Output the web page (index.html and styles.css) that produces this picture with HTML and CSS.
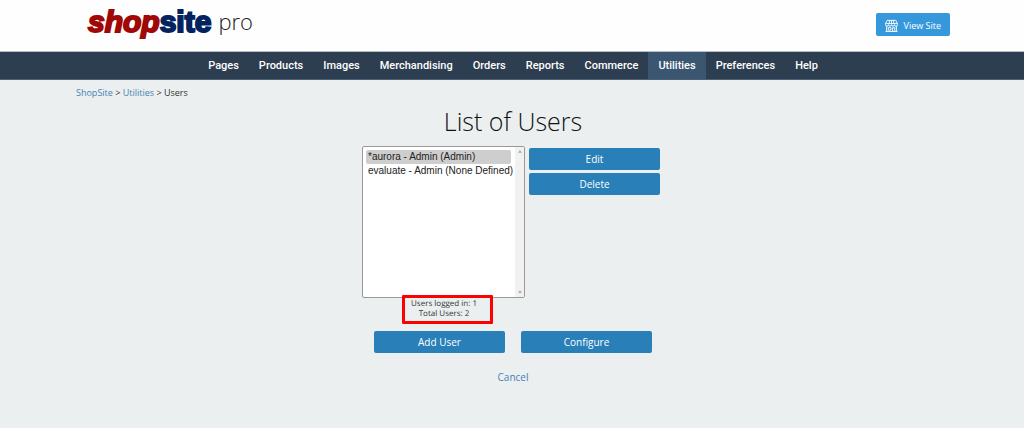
FILE: index.html
```html
<!DOCTYPE html>
<html lang="en">
<head>
<meta charset="utf-8">
<title>List of Users</title>
<link rel="stylesheet" href="styles.css">
</head>
<body>
<header class="header">
  <div class="brand"><span class="logo"><span class="logo-shop">shop</span><span class="logo-site">site</span></span><span class="edition">pro</span></div>
  <button class="view-site" type="button">
    <svg class="store-icon" viewBox="0 0 24 24" fill="none" stroke="currentColor" stroke-width="1.7" aria-hidden="true">
      <path d="M4 2.500h16l3 6H1zM8.500 2.500l-1 6M12 2.500v6M15.500 2.500l1 6M1 8.500v2a2.750 2.750 0 0 0 5.500 0a2.750 2.750 0 0 0 5.500 0a2.750 2.750 0 0 0 5.500 0a2.750 2.750 0 0 0 5.500 0v-2M3 13v10M21 13v10M1 23h22M6 16h5v4.500H6zM14 23v-7h4v7"/>
    </svg>
    <span>View Site</span>
  </button>
</header>
<nav class="nav">
  <a href="#">Pages</a><a href="#">Products</a><a href="#">Images</a><a href="#">Merchandising</a><a href="#">Orders</a><a href="#">Reports</a><a href="#">Commerce</a><a href="#" class="active">Utilities</a><a href="#">Preferences</a><a href="#">Help</a>
</nav>
<main class="main">
  <div class="crumbs"><a href="#">ShopSite</a> &gt; <a href="#">Utilities</a> &gt; Users</div>
  <h1 class="title">List of Users</h1>
  <form class="form">
    <div class="users">
      <div class="list-column">
        <div class="list-box">
          <select class="list" size="10" aria-label="Users">
            <option class="chosen">*aurora - Admin (Admin)</option>
            <option>evaluate - Admin (None Defined)</option>
          </select>
          <div class="track" aria-hidden="true">
            <svg class="arrow" viewBox="0 0 6 4"><path d="M0 4l3-4 3 4z"/></svg>
            <svg class="arrow" viewBox="0 0 6 4"><path d="M0 0l3 4 3-4z"/></svg>
          </div>
        </div>
        <div class="counts">Users logged in: 1<br>Total Users: 2</div>
      </div>
      <div class="side">
        <button class="btn" type="button">Edit</button>
        <button class="btn" type="button">Delete</button>
      </div>
    </div>
    <div class="actions">
      <button class="btn" type="button">Add User</button>
      <button class="btn" type="button">Configure</button>
    </div>
    <a class="cancel" href="#">Cancel</a>
  </form>
</main>
</body>
</html>
```
FILE: styles.css
```css
* { box-sizing: border-box; }
body {
  margin: 0;
  min-height: 100vh;
  background: #ebeff0;
  color: #333;
  font-family: "Open Sans", "Noto Sans", sans-serif;
  font-size: 10px;
}
a { color: #4682b4; text-decoration: none; }
.header {
  display: flex;
  justify-content: space-between;
  align-items: center;
  height: 51px;
  padding: 0 74px 2px 88px;
  background: #fefefe;
}
.brand { display: flex; align-items: center; gap: 7px; padding-bottom: 5px; }
.logo {
  font: italic bold 30px/40px "Liberation Sans", Arial, sans-serif;
  -webkit-text-stroke: 2px currentColor;
}
.logo-shop { color: #a00808; }
.logo-site { color: #03235f; font-style: normal; }
.edition { color: #222; font-size: 22px; font-weight: 300; line-height: 30px; padding-bottom: 3px; }
.view-site {
  display: flex;
  align-items: center;
  gap: 6px;
  height: 23px;
  padding: 2px 9px 0;
  border: 0;
  border-radius: 2px;
  background: #3498db;
  color: #fff;
  font: 9px "Open Sans", sans-serif;
}
.store-icon { width: 13px; height: 13px; }
.nav {
  display: flex;
  justify-content: center;
  height: 29px;
  padding-left: 2px;
  border-top: 1px solid #b4bec5;
  border-bottom: 1px solid #4b6076;
  background: #2c3e50;
}
.nav a {
  padding: 0 10px;
  color: #fff;
  font: 500 11px/27px Roboto, sans-serif;
}
.nav .active { background: #3a5670; }
.main { padding: 6px 0 24px; }
.crumbs { padding-left: 76px; font-size: 9px; line-height: 14px; }
.title {
  margin: 2px 0 6px;
  padding-left: 2px;
  color: #111;
  font-size: 25px;
  font-weight: 300;
  line-height: 38px;
  text-align: center;
}
.form { display: flex; flex-direction: column; align-items: center; }
.users { display: flex; align-items: flex-start; gap: 4px; padding-right: 2px; }
.list-column { width: 163px; }
.list-box { position: relative; }
.list {
  display: block;
  width: 100%;
  height: 152px;
  padding: 3px 13px 3px 3px;
  border: 1px solid #999;
  border-radius: 2px;
  background: #fff;
  color: #222;
  font: 10px "Liberation Sans", Arial, sans-serif;
}
.list option {
  height: 14px;
  min-height: 14px;
  padding: 1px 2px;
  border-radius: 2px;
  line-height: 12px;
}
.list .chosen { background: #cecece; }
.list::-webkit-scrollbar { display: none; }
.track {
  position: absolute;
  top: 1px;
  right: 1px;
  bottom: 1px;
  display: flex;
  flex-direction: column;
  justify-content: space-between;
  align-items: center;
  width: 9px;
  padding: 3px 0;
  background: #f1f1f1;
}
.arrow { width: 4px; height: 3px; fill: #a3a3a3; }
.counts {
  position: relative;
  width: 91px;
  margin: -3px 0 0 40px;
  padding: 1px 7px 2px 0;
  border: 3px solid #f00;
  border-radius: 1px;
  font-size: 8px;
  line-height: 10px;
  text-align: center;
  text-rendering: geometricPrecision;
}
.side { display: flex; flex-direction: column; gap: 3px; padding-top: 2px; }
.btn {
  width: 131px;
  height: 22px;
  padding: 0;
  border: 0;
  border-radius: 2px;
  background: #2980b9;
  color: #fff;
  font: 10px "Open Sans", sans-serif;
}
.actions { display: flex; gap: 16px; margin-top: 7px; padding-left: 2px; }
.cancel { margin-top: 17px; padding-left: 2px; font-size: 10px; line-height: 14px; }
```
